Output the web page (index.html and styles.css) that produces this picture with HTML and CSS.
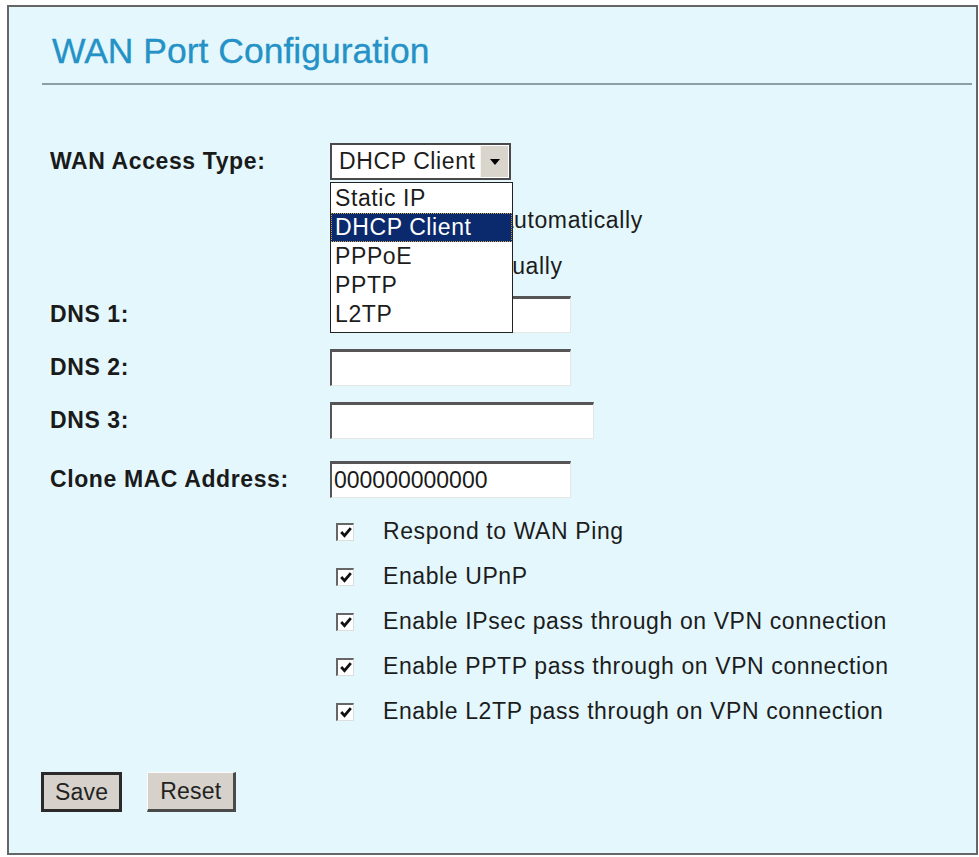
FILE: index.html
```html
<!DOCTYPE html>
<html lang="en">
<head>
<meta charset="UTF-8" />
<title>WAN Port Configuration</title>
<link rel="stylesheet" href="styles.css">
</head>
<body>
<div class="panel">
    <div class="panel-head">
        <h1 class="title">WAN Port Configuration</h1>
    </div>

    <form class="wan-form" autocomplete="off">
        <div class="row row-type">
            <label class="label">WAN Access Type:</label>
            <div class="select-wrap">
                <div class="select">
                    <span class="select-value">DHCP Client</span>
                    <span class="select-btn">
                        <svg width="10" height="6" viewBox="0 0 10 6"><path d="M0 0h10L5 6z" fill="#000"/></svg>
                    </span>
                </div>
                <ul class="select-list">
                    <li>Static IP</li>
                    <li class="selected">DHCP Client</li>
                    <li>PPPoE</li>
                    <li>PPTP</li>
                    <li>L2TP</li>
                </ul>
            </div>
        </div>

        <div class="row row-radio">
            <span class="label"></span>
            <span class="radio on"></span>
            <span class="radio-text">Obtain DNS automatically</span>
        </div>
        <div class="row row-radio">
            <span class="label"></span>
            <span class="radio"></span>
            <span class="radio-text">Set DNS manually</span>
        </div>

        <div class="row row-dns1">
            <label class="label">DNS 1:</label>
            <input class="field" type="text" />
        </div>
        <div class="row row-dns2">
            <label class="label">DNS 2:</label>
            <input class="field" type="text" />
        </div>
        <div class="row row-dns3">
            <label class="label">DNS 3:</label>
            <input class="field wide" type="text" />
        </div>
        <div class="row row-mac">
            <label class="label">Clone MAC Address:</label>
            <input class="field" type="text" value="000000000000" />
        </div>

        <div class="checks">
            <div class="check-row"><span class="check"><svg width="12" height="11" viewBox="0 0 12 11"><path d="M1.2 5l3.3 3.6L10.8 1.2" fill="none" stroke="#111" stroke-width="2.8"/></svg></span>Respond to WAN Ping</div>
            <div class="check-row"><span class="check"><svg width="12" height="11" viewBox="0 0 12 11"><path d="M1.2 5l3.3 3.6L10.8 1.2" fill="none" stroke="#111" stroke-width="2.8"/></svg></span>Enable UPnP</div>
            <div class="check-row"><span class="check"><svg width="12" height="11" viewBox="0 0 12 11"><path d="M1.2 5l3.3 3.6L10.8 1.2" fill="none" stroke="#111" stroke-width="2.8"/></svg></span>Enable IPsec pass through on VPN connection</div>
            <div class="check-row"><span class="check"><svg width="12" height="11" viewBox="0 0 12 11"><path d="M1.2 5l3.3 3.6L10.8 1.2" fill="none" stroke="#111" stroke-width="2.8"/></svg></span>Enable PPTP pass through on VPN connection</div>
            <div class="check-row"><span class="check"><svg width="12" height="11" viewBox="0 0 12 11"><path d="M1.2 5l3.3 3.6L10.8 1.2" fill="none" stroke="#111" stroke-width="2.8"/></svg></span>Enable L2TP pass through on VPN connection</div>
        </div>

        <div class="buttons">
            <button type="submit" class="btn btn-default">Save</button>
            <button type="reset" class="btn">Reset</button>
        </div>
    </form>
</div>
</body>
</html>
```

FILE: styles.css
```css
* {
    box-sizing: border-box;
}
body, html {
    margin: 0;
    background: #fff;
    font-family: "Liberation Sans", Arial, sans-serif;
    color: #1c1c1c;
}
.panel {
    margin: 5px 0 0 7px;
    width: 971px;
    height: 850px;
    border: 2px solid #666;
    background: #e3f7fc;
}
.panel-head {
    margin: 0 4px 0 33px;
    padding: 24px 0 12px 10px;
    border-bottom: 2px solid #8d9fa6;
}
.title {
    margin: 0;
    font-size: 35.5px;
    line-height: 40px;
    font-weight: normal;
    color: #2492c6;
    -webkit-text-stroke: 0.3px #2492c6;
}
.wan-form {
    padding-left: 41px;
    font-size: 23px;
    letter-spacing: 0.6px;
}
.row {
    display: flex;
    align-items: center;
    height: 37px;
}
.label {
    width: 280px;
    flex: none;
    font-weight: bold;
    color: #1a1a1a;
}
.row-type { margin-top: 58px; }
.row-radio { height: 46px; }
.row-type + .row-radio { margin-top: 17px; }
.row-dns1 { margin-top: 7px; }
.row-dns2 { margin-top: 16px; }
.row-dns3 { margin-top: 16px; }
.row-mac { margin-top: 22px; }

/* fake classic select with its list open */
.select-wrap {
    position: relative;
}
.select {
    display: flex;
    align-items: center;
    width: 181px;
    height: 37px;
    border: 2px solid #4a4a4a;
    background: #fff;
    padding: 0 1px 0 7px;
}
.select-value {
    flex: 1;
}
.select-btn {
    width: 28px;
    height: 31px;
    display: flex;
    align-items: center;
    justify-content: center;
    background: #d9d5cd;
    border-left: 1px solid #f4f2ee;
}
.select-list {
    position: absolute;
    top: 39px;
    left: 0;
    width: 183px;
    margin: 0;
    padding: 1px 0 3px;
    list-style: none;
    background: #fff;
    border: 1px solid #222;
    z-index: 2;
}
.select-list li {
    height: 29px;
    line-height: 29px;
    padding-left: 4px;
}
.select-list li.selected {
    background: #0b2a6e;
    color: #fff;
    outline: 1px dotted #c9a24a;
    outline-offset: -1px;
}

.radio {
    width: 17px;
    height: 17px;
    margin-left: 3px;
    border-radius: 50%;
    border: 2px solid #777;
    background: #fff;
}
.radio-text {
    margin-left: 15px;
}

.field {
    width: 241px;
    height: 37px;
    padding: 0 2px;
    font: inherit;
    letter-spacing: 0;
    color: #1a1a1a;
    background: #fff;
    border-top: 3px solid #555;
    border-left: 2px solid #555;
    border-right: 1px solid #e6e6e6;
    border-bottom: 1px solid #e6e6e6;
    outline: none;
}
.field.wide {
    width: 264px;
}

.checks {
    margin-top: 11px;
    padding-left: 286px;
}
.check-row {
    display: flex;
    align-items: center;
    height: 45px;
}
.check {
    width: 18px;
    height: 18px;
    margin-right: 29px;
    display: flex;
    align-items: center;
    justify-content: center;
    background: #fff;
    border-top: 2px solid #666;
    border-left: 2px solid #666;
    border-right: 1px solid #ddd;
    border-bottom: 1px solid #ddd;
}

.buttons {
    display: flex;
    gap: 25px;
    margin: 38px 0 0 -9px;
}
.btn {
    height: 40px;
    padding: 0 12px;
    font: inherit;
    letter-spacing: 0.2px;
    color: #222;
    background: #d6d2cb;
    border-top: 1px solid #fbfbfb;
    border-left: 1px solid #fbfbfb;
    border-right: 3px solid #4a4a4a;
    border-bottom: 3px solid #4a4a4a;
}
.btn-default {
    border: 3px solid #2a2a2a;
    padding: 0 11px;
}
```
